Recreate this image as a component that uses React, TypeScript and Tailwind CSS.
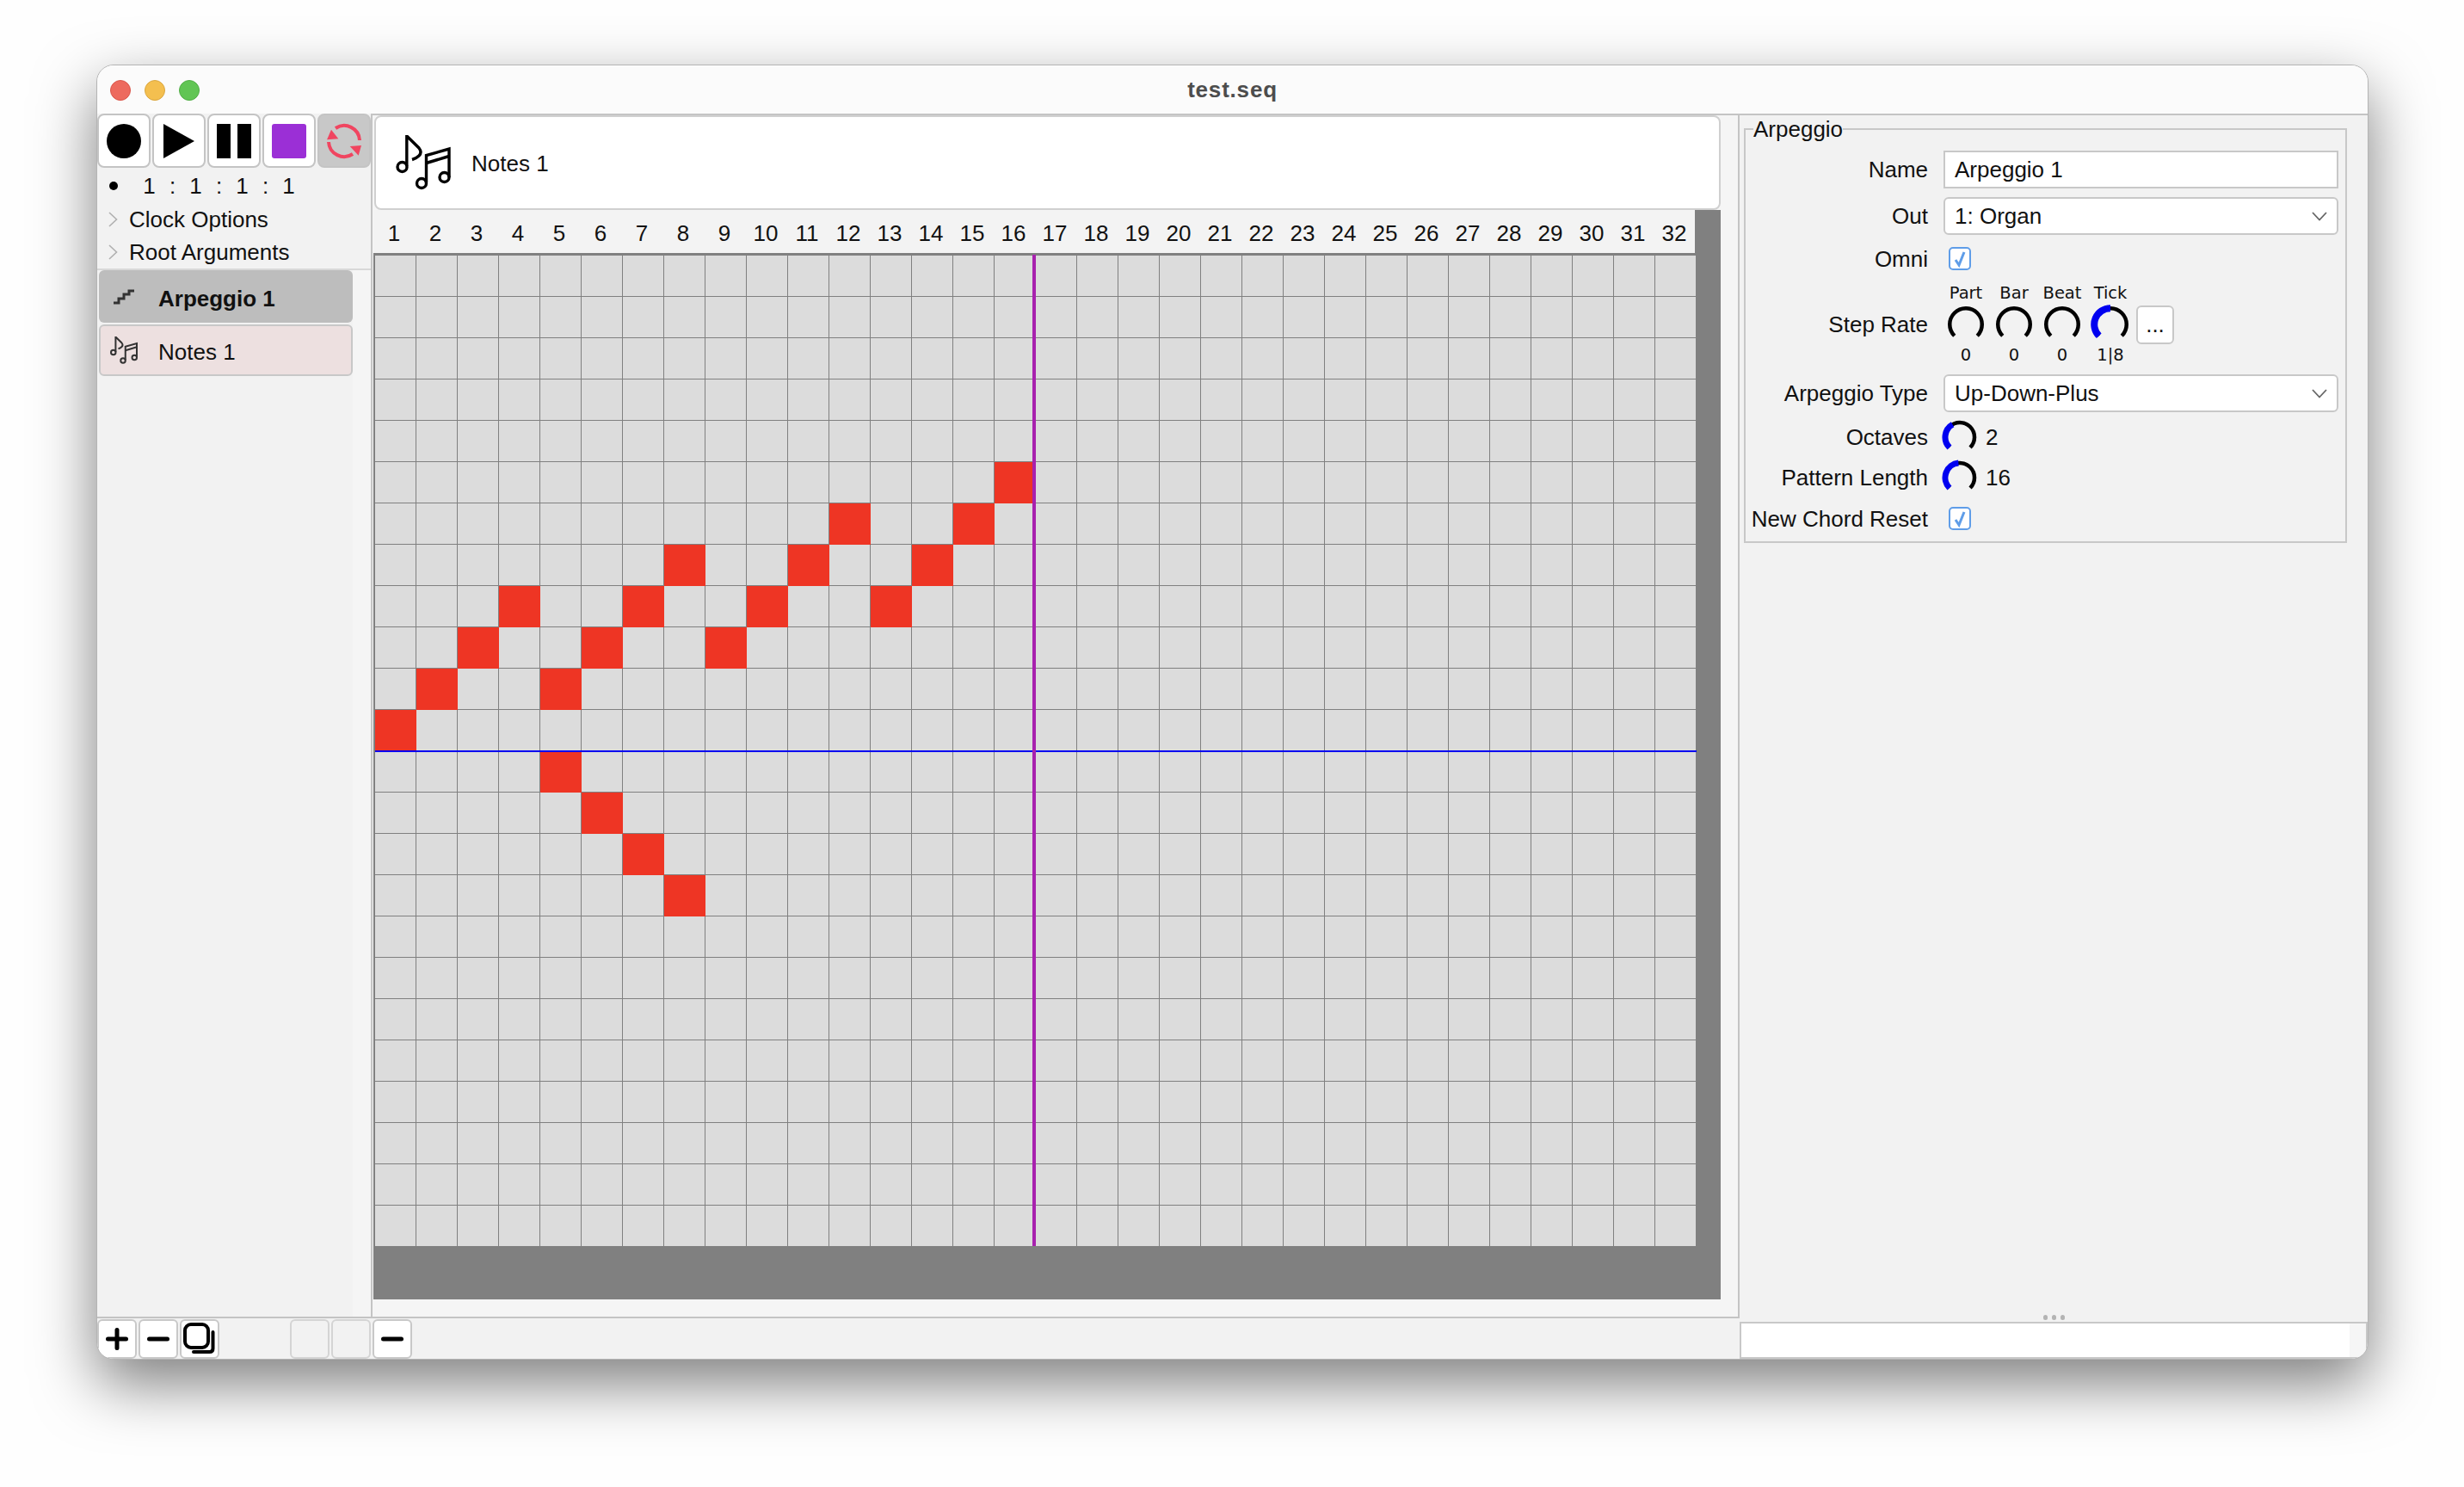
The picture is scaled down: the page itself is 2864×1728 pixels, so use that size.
import React from "react";

const RED_CELLS = new Set(
  [
    [1, 11], [2, 10], [3, 9], [4, 8], [5, 10], [5, 12], [6, 9], [6, 13],
    [7, 8], [7, 14], [8, 7], [8, 15], [9, 9], [10, 8], [11, 7], [12, 6],
    [13, 8], [14, 7], [15, 6], [16, 5],
  ].map(([col, row]) => `${col}-${row}`)
);

const columns = Array.from({ length: 32 }, (_, i) => i + 1);
const rows = Array.from({ length: 24 }, (_, i) => i);

const polar = (c: number, r: number, fraction: number) => {
  const a = ((-225 + 270 * fraction) * Math.PI) / 180;
  return `${c + r * Math.cos(a)} ${c + r * Math.sin(a)}`;
};

const arc = (c: number, r: number, fraction: number) =>
  `M${polar(c, r, 0)} A${r} ${r} 0 ${fraction * 270 > 180 ? 1 : 0} 1 ${polar(c, r, fraction)}`;

const Knob = ({ size, r, stroke, blue, fill = 0 }: { size: number; r: number; stroke: number; blue: number; fill?: number }) => {
  const c = size / 2;
  return (
    <svg width={size} height={size} viewBox={`0 0 ${size} ${size}`} fill="none" className="shrink-0">
      <path d={arc(c, r, 1)} stroke="#000" strokeWidth={stroke} />
      {fill > 0 && <path d={arc(c, r, fill)} stroke="#0000f0" strokeWidth={blue} />}
    </svg>
  );
};

const NotesIcon = ({ size, color, weight }: { size: number; color: string; weight: number }) => (
  <svg width={size} height={size} viewBox="0 0 64 64" fill="none" stroke={color} strokeWidth={weight} className="shrink-0">
    <circle cx="7.5" cy="37" r="5.5" />
    <path d="M12.8 36V1 L27 15 Q31 20 27 24 Q24 27 19 28.5" />
    <circle cx="30" cy="56" r="5.5" />
    <circle cx="56.5" cy="49" r="5.5" />
    <path d="M35.5 55V23.5 L62 16V49" />
    <path d="M35.5 32.5 L62 24.5" />
  </svg>
);

const TransportButton = ({ active, children }: { active?: boolean; children?: React.ReactNode }) => (
  <div
    className={`flex h-[63px] w-[62px] items-center justify-center rounded-lg border-2 border-[#c4c4c4] ${
      active ? "bg-[#c8c8c8]" : "bg-white"
    }`}
  >
    {children}
  </div>
);

const SmallButton = ({ disabled, children }: { disabled?: boolean; children?: React.ReactNode }) => (
  <div
    className={`flex h-[46px] w-[46px] items-center justify-center rounded-md border-2 ${
      disabled ? "border-[#d4d4d4] bg-[#f2f2f2]" : "border-[#c8c8c8] bg-white"
    }`}
  >
    {children}
  </div>
);

const Plus = () => (
  <svg width="30" height="30" viewBox="0 0 30 30" stroke="#000" strokeWidth="5" strokeLinecap="round">
    <path d="M4.5 15h21M15 4.5v21" />
  </svg>
);

const Minus = () => (
  <svg width="30" height="30" viewBox="0 0 30 30" stroke="#000" strokeWidth="5" strokeLinecap="round">
    <path d="M4.5 15h21" />
  </svg>
);

const TreeRow = ({ label, className }: { label: string; className: string }) => (
  <div className={`flex items-center pl-[13px] ${className}`}>
    <svg width="11" height="18" viewBox="0 0 11 18" fill="none" stroke="#b0b0b0" strokeWidth="1.6">
      <path d="M1 1l8.5 8L1 17" />
    </svg>
    <span className="ml-[13px]">{label}</span>
  </div>
);

const Checkbox = () => (
  <div className="ml-[6px] flex h-[27px] w-[26px] items-center justify-center rounded-[5px] border-2 border-[#5f9de8] bg-white">
    <svg width="18" height="20" viewBox="0 0 18 20" fill="none" stroke="#5f9de8" strokeWidth="3">
      <path d="M4 11l4 6 6-15" />
    </svg>
  </div>
);

const Select = ({ value }: { value: string }) => (
  <div className="flex h-[44px] w-[459px] items-center justify-between rounded-md border-2 border-[#c8c8c8] bg-white pl-[11px] pr-[11px]">
    <span>{value}</span>
    <svg width="18" height="11" viewBox="0 0 18 11" fill="none" stroke="#666" strokeWidth="1.8">
      <path d="M1 1l8 8.5L17 1" />
    </svg>
  </div>
);

const FormRow = ({ label, className, children }: { label: string; className: string; children: React.ReactNode }) => (
  <div className={`flex items-center ${className}`}>
    <div className="mr-[18px] w-[212px] shrink-0 whitespace-nowrap text-right">{label}</div>
    {children}
  </div>
);

const StepKnob = ({ label, value, fill }: { label: string; value: string; fill?: number }) => (
  <div className="flex w-[56px] flex-col items-center font-['DejaVu_Sans',sans-serif] text-[19.5px]">
    <div className="h-[22px] leading-[22px]">{label}</div>
    <div className="mt-[2px]">
      <Knob size={46} r={18.75} stroke={4.5} blue={8} fill={fill} />
    </div>
    <div className="mt-[2px] h-[22px] leading-[22px]">{value}</div>
  </div>
);

export default function App() {
  return (
    <div className="h-[1728px] w-[2864px] overflow-hidden bg-[#fefefe] pl-[112px] pt-[75px] font-['Liberation_Sans',Arial,sans-serif] text-[26px] leading-[30px] text-[#111]">
      <div className="flex h-[1505px] w-[2641px] flex-col overflow-hidden rounded-[20px] border border-[#b4b4b4] bg-[#f2f2f2] shadow-[0_28px_70px_rgba(0,0,0,0.5)]">
        {/* Title bar */}
        <div className="grid h-[56px] shrink-0 grid-cols-[1fr_auto_1fr] items-center bg-[#fbfbfb]">
          <div className="flex gap-[16px] pl-[15px] pt-[1px]">
            <div className="h-[24px] w-[24px] rounded-full border border-[#d9574c] bg-[#ed6a5e]" />
            <div className="h-[24px] w-[24px] rounded-full border border-[#d9a63f] bg-[#f4bf4f]" />
            <div className="h-[24px] w-[24px] rounded-full border border-[#52ad47] bg-[#61c554]" />
          </div>
          <div className="text-[26px] font-bold tracking-[0.8px] text-[#4d4d4d]">test.seq</div>
          <div />
        </div>

        <div className="flex min-h-0 flex-1">
          {/* Sequence side */}
          <div className="flex w-[1909px] shrink-0 flex-col">
            <div className="flex h-[1400px] shrink-0 border-b-2 border-[#c4c4c4]">
              {/* Left column */}
              <div className="flex w-[320px] shrink-0 flex-col border-r-2 border-[#c4c4c4]">
                <div className="flex gap-[2px]">
                  <TransportButton>
                    <div className="h-[40px] w-[40px] rounded-full bg-black" />
                  </TransportButton>
                  <TransportButton>
                    <svg width="36" height="40" viewBox="0 0 36 40">
                      <polygon points="0,0 36,20 0,40" fill="#000" />
                    </svg>
                  </TransportButton>
                  <TransportButton>
                    <div className="flex gap-[8px]">
                      <div className="h-[40px] w-[16px] bg-black" />
                      <div className="h-[40px] w-[16px] bg-black" />
                    </div>
                  </TransportButton>
                  <TransportButton>
                    <div className="h-[40px] w-[40px] rounded-[3px] bg-[#9b2fd6]" />
                  </TransportButton>
                  <TransportButton active>
                    <svg width="44" height="44" viewBox="0 0 44 44" fill="none" stroke="#f04560" strokeWidth="4">
                      <path d="M12 7A18 18 0 0 1 40 21" />
                      <path d="M32 37A18 18 0 0 1 4 23" />
                      <polygon points="7,8.7 2,20.3 15.3,19.3" fill="#f04560" stroke="none" />
                      <polygon points="42,27 28.7,28 38.7,38.7" fill="#f04560" stroke="none" />
                    </svg>
                  </TransportButton>
                </div>

                <div className="flex h-[41px] items-center pl-[14px] pt-[1px]">
                  <div className="h-[10px] w-[10px] rounded-full bg-black" />
                  <div className="ml-[23px] flex">
                    {["1", ":", "1", ":", "1", ":", "1"].map((part, i) => (
                      <span key={i} className="w-[27px] text-center">
                        {part}
                      </span>
                    ))}
                  </div>
                </div>
                <TreeRow label="Clock Options" className="h-[38px]" />
                <TreeRow label="Root Arguments" className="h-[38px] pb-[1px]" />

                <div className="flex min-h-0 flex-1 border-t-2 border-[#d8d8d8]">
                  <div className="flex w-[297px] shrink-0 flex-col gap-[2px] pl-[2px]">
                    <div className="flex h-[61px] items-center rounded-md bg-[#bdbdbd] pl-[17px] font-bold">
                      <svg width="24" height="18" viewBox="0 0 24 18" fill="none" stroke="#333" strokeWidth="3" className="shrink-0">
                        <path d="M0 16h6v-5h6V6h6V2h6" />
                      </svg>
                      <span className="ml-[28px] pt-[4px]">Arpeggio 1</span>
                    </div>
                    <div className="flex h-[60px] items-center rounded-md border-2 border-[#c8c8c8] bg-[#ede0e0] pl-[11px]">
                      <NotesIcon size={32} color="#333" weight={4} />
                      <span className="ml-[24px] pt-[4px]">Notes 1</span>
                    </div>
                  </div>
                  <div className="flex-1 bg-[#f5f5f5]" />
                </div>
              </div>

              {/* Center column */}
              <div className="flex min-w-0 flex-1 flex-col border-r-2 border-t-2 border-[#c4c4c4] bg-[#f5f5f5]">
                <div className="ml-[2px] flex h-[110px] w-[1565px] items-center rounded-lg border-2 border-[#d0d0d0] bg-white pl-[23px]">
                  <NotesIcon size={64} color="#000" weight={3.4} />
                  <span className="ml-[24px] pt-[2px]">Notes 1</span>
                </div>
                <div className="ml-[1px] flex h-[50px] w-[1566px] bg-[#f3f3f3]">
                  <div className="flex items-center pt-[4px]">
                    {columns.map((n) => (
                      <div key={n} className="w-[48px] text-center">
                        {n}
                      </div>
                    ))}
                  </div>
                  <div className="flex-1 bg-[#808080]" />
                </div>
                <div className="ml-[1px] h-[1216px] w-[1566px] bg-[#808080] pl-[2px] pt-[3px]">
                  <div className="relative w-[1536px]">
                    {rows.map((row) => (
                      <div key={row} className="flex">
                        {columns.map((col) => (
                          <div
                            key={col}
                            className={
                              RED_CELLS.has(`${col}-${row}`)
                                ? "h-[48px] w-[48px] bg-[#ee3524]"
                                : "h-[48px] w-[48px] border-b border-r border-[#808080] bg-[#dcdcdc]"
                            }
                          />
                        ))}
                      </div>
                    ))}
                    <div className="absolute left-0 top-[575px] h-[2px] w-[1536px] bg-[#0000f0]" />
                    <div className="absolute left-[764px] top-[-1px] h-[1152px] w-[4px] bg-[#a821ae]" />
                  </div>
                </div>
              </div>
            </div>

            {/* Bottom buttons */}
            <div className="flex flex-1 gap-[2px] pt-px">
              <SmallButton>
                <Plus />
              </SmallButton>
              <SmallButton>
                <Minus />
              </SmallButton>
              <SmallButton>
                <svg width="40" height="40" viewBox="0 0 40 40" fill="none" stroke="#000" strokeWidth="4" strokeLinecap="round">
                  <rect x="3" y="3" width="27" height="27" rx="7" />
                  <path d="M35.5 12V31q0 4-4 4H13" />
                </svg>
              </SmallButton>
              <div className="w-[78px]" />
              <SmallButton disabled />
              <SmallButton disabled />
              <SmallButton>
                <Minus />
              </SmallButton>
            </div>
          </div>

          {/* Right panel */}
          <div className="flex min-w-0 flex-1 flex-col border-t-2 border-[#c4c4c4] pt-[1px]">
            <fieldset className="ml-[5px] w-[701px] border-2 border-[#c8c8c8] pb-[13px]">
              <legend className="ml-[9px] h-[30px] leading-[30px]">Arpeggio</legend>
              <FormRow label="Name" className="mt-[10px] h-[44px]">
                <div className="flex h-[44px] w-[459px] items-center border-2 border-[#c8c8c8] bg-white pl-[11px]">Arpeggio 1</div>
              </FormRow>
              <FormRow label="Out" className="mt-[10px] h-[44px]">
                <Select value="1: Organ" />
              </FormRow>
              <FormRow label="Omni" className="mt-[14px] h-[27px]">
                <Checkbox />
              </FormRow>
              <FormRow label="Step Rate" className="mt-[16px] h-[94px]">
                <div className="-ml-[2px] flex items-center">
                  <StepKnob label="Part" value="0" />
                  <StepKnob label="Bar" value="0" />
                  <StepKnob label="Beat" value="0" />
                  <StepKnob label="Tick" value="1|8" fill={0.5} />
                  <div className="ml-[2px] flex h-[45px] w-[44px] items-center justify-center rounded-md border-2 border-[#c8c8c8] bg-white">...</div>
                </div>
              </FormRow>
              <FormRow label="Arpeggio Type" className="mt-[11px] h-[44px]">
                <Select value="Up-Down-Plus" />
              </FormRow>
              <FormRow label="Octaves" className="mt-[9px] h-[40px]">
                <div className="-ml-[2px] flex items-center">
                  <Knob size={42} r={17} stroke={4.5} blue={7} fill={0.39} />
                  <span className="ml-[9px]">2</span>
                </div>
              </FormRow>
              <FormRow label="Pattern Length" className="mt-[7px] h-[40px]">
                <div className="-ml-[2px] flex items-center">
                  <Knob size={42} r={17} stroke={4.5} blue={7} fill={0.48} />
                  <span className="ml-[9px]">16</span>
                </div>
              </FormRow>
              <FormRow label="New Chord Reset" className="mt-[14px] h-[27px]">
                <Checkbox />
              </FormRow>
            </fieldset>

            <div className="mt-auto flex justify-center gap-[5px] pb-[2px]">
              <div className="h-[6px] w-[5px] rounded-full bg-[#b4b4b4]" />
              <div className="h-[6px] w-[5px] rounded-full bg-[#b4b4b4]" />
              <div className="h-[6px] w-[5px] rounded-full bg-[#b4b4b4]" />
            </div>
            <div className="flex h-[43px] shrink-0 border-2 border-[#c8c8c8]">
              <div className="flex-1 bg-white" />
              <div className="w-[19px] bg-[#f6f6f6]" />
            </div>
          </div>
        </div>
      </div>
    </div>
  );
}
